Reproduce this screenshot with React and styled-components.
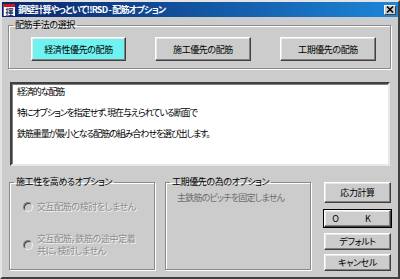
import React from "react";
import styled, { createGlobalStyle } from "styled-components";

const GlobalStyle = createGlobalStyle`
  html, body {
    margin: 0;
    padding: 0;
    background: #cccccc;
  }
  body {
    font-family: "Noto Sans CJK JP", "Liberation Sans", sans-serif;
    font-size: 9px;
    letter-spacing: -0.4px;
    font-feature-settings: "palt";
  }
`;

const Window = styled.div`
  width: 400px;
  height: 279px;
  box-sizing: border-box;
  background: #cccccc;
  border: 2px solid;
  border-color: #e4e4e4 #404040 #404040 #e4e4e4;
  display: flex;
  flex-direction: column;
`;

const TitleBar = styled.div`
  height: 15px;
  display: flex;
  align-items: center;
  padding: 0 2px 0 1px;
  background: linear-gradient(to right, #0a246a, #1c86d8);
  color: white;
`;

const AppIcon = styled.span`
  width: 12px;
  height: 12px;
  box-sizing: border-box;
  background: white;
  border-top: 3px solid #d01818;
  border-left: 1px solid #5060a0;
  color: #102060;
  font-size: 8px;
  line-height: 9px;
  letter-spacing: 0;
  font-weight: bold;
  text-align: center;
  overflow: hidden;
`;

const Title = styled.span`
  margin-left: 3px;
  font-weight: bold;
  font-size: 9px;
  letter-spacing: -0.8px;
  line-height: 15px;
  white-space: nowrap;
  flex: 1;
`;

const CloseButton = styled.span`
  width: 12px;
  height: 10px;
  box-sizing: border-box;
  background: #cccccc;
  border: 1px solid;
  border-color: #fff #404040 #404040 #fff;
  display: flex;
  align-items: center;
  justify-content: center;
`;

const Body = styled.div`
  flex: 1;
  display: flex;
  flex-direction: column;
  padding: 2px 7px 0 6px;
`;

const Group = styled.fieldset`
  margin: 0 0 0 ${(p) => p.$left || 0}px;
  padding: ${(p) => p.$pad || "0"};
  border: 1px solid #8a8a8a;
  box-shadow: inset 1px 1px 0 #fff, 1px 1px 0 #fff;
  min-width: 0;
  box-sizing: border-box;
  width: ${(p) => p.$width || "auto"};
  height: ${(p) => (p.$height ? `${p.$height}px` : "auto")};
  overflow: hidden;
`;

const Legend = styled.legend`
  margin-left: 4px;
  padding: 0 2px;
  font-size: 9px;
  line-height: 12px;
  color: #000;
`;

const MethodRow = styled.div`
  display: flex;
  gap: 29px;
  padding-left: 22px;
`;

const WinButton = styled.button`
  width: ${(p) => p.$w || 96}px;
  height: ${(p) => p.$h || 24}px;
  margin-top: ${(p) => p.$top || 0}px;
  box-sizing: border-box;
  padding: 0;
  font-family: inherit;
  font-feature-settings: "palt";
  font-size: 9px;
  color: #000;
  background: ${(p) => (p.$active ? "#70f2f0" : "#cccccc")};
  border: 1px solid;
  border-color: #fff #404040 #404040 #fff;
  box-shadow: inset -1px -1px 0 #808080, inset 1px 1px 0 #e8e8e8;
  outline: ${(p) => (p.$default ? "1px solid #000" : "none")};
  outline-offset: 0;
  letter-spacing: ${(p) => p.$spacing || "-0.4px"};
`;

const Memo = styled.div`
  margin: 13px 1px 0 2px;
  height: 84px;
  box-sizing: border-box;
  background: #fff;
  border: 2px solid;
  border-color: #404040 #e8e8e8 #e8e8e8 #404040;
  box-shadow: inset 1px 1px 0 #808080;
  padding: 2px 5px 0;
  display: flex;
  flex-direction: column;
  gap: 9px;
`;

const MemoLine = styled.div`
  font-size: 9px;
  letter-spacing: -1.1px;
  line-height: 12px;
  color: #000;
  white-space: nowrap;
`;

const BottomRow = styled.div`
  margin-top: 10px;
  display: flex;
  align-items: flex-start;
`;

const RadioList = styled.div`
  display: flex;
  flex-direction: column;
  gap: 20px;
  padding: 13px 0 0 13px;
`;

const RadioRow = styled.label`
  display: flex;
  align-items: center;
  gap: 4px;
`;

const RadioDot = styled.span`
  width: 10px;
  height: 10px;
  flex: none;
  border-radius: 50%;
  box-sizing: border-box;
  border: 1px solid;
  border-color: #808080 #f0f0f0 #f0f0f0 #808080;
  background: #cccccc;
  box-shadow: inset 1px 1px 0 #404040;
`;

const DisabledText = styled.span`
  color: #8c8c8c;
  text-shadow: 1px 1px 0 #f4f4f4;
  font-size: 9px;
  line-height: 12px;
  white-space: nowrap;
`;

const Note = styled.div`
  padding: 4px 0 0 11px;
  color: #6c6c6c;
  font-size: 9px;
  letter-spacing: -0.8px;
  line-height: 12px;
  white-space: nowrap;
`;

const ButtonColumn = styled.div`
  margin: 6px 0 0 auto;
  display: flex;
  flex-direction: column;
`;

export default function App() {
  return (
    <>
      <GlobalStyle />
      <Window>
        <TitleBar>
          <AppIcon>揮</AppIcon>
          <Title>鋼壁計算やっといて!!RSD - 配筋オプション</Title>
          <CloseButton>
            <svg width="8" height="7" viewBox="0 0 8 7">
              <path d="M1 0.5 L7 6.5 M7 0.5 L1 6.5" stroke="#000" strokeWidth="1.6" />
            </svg>
          </CloseButton>
        </TitleBar>
        <Body>
          <Group $pad="6px 0 7px 0">
            <Legend>配筋手法の選択</Legend>
            <MethodRow>
              <WinButton $active $w={95}>経済性優先の配筋</WinButton>
              <WinButton>施工優先の配筋</WinButton>
              <WinButton>工期優先の配筋</WinButton>
            </MethodRow>
          </Group>
          <Memo>
            <MemoLine>経済的な配筋</MemoLine>
            <MemoLine>特にオプションを指定せず、現在与えられている断面で</MemoLine>
            <MemoLine>鉄筋重量が最小となる配筋の組み合わせを選び出します。</MemoLine>
          </Memo>
          <BottomRow>
            <Group $width="146px" $height={94} $left={1}>
              <Legend>施工性を高めるオプション</Legend>
              <RadioList>
                <RadioRow>
                  <RadioDot />
                  <DisabledText>交互配筋の検討をしません</DisabledText>
                </RadioRow>
                <RadioRow>
                  <RadioDot />
                  <DisabledText>
                    交互配筋，鉄筋の途中定着
                    <br />
                    共に，検討しません
                  </DisabledText>
                </RadioRow>
              </RadioList>
            </Group>
            <Group $width="146px" $height={94} $left={10}>
              <Legend>工期優先の為のオプション</Legend>
              <Note>主鉄筋のピッチを固定しません</Note>
            </Group>
            <ButtonColumn>
              <WinButton $w={67} $h={21}>応力計算</WinButton>
              <WinButton $w={67} $h={17} $top={7} $default $spacing="12px">
                O K
              </WinButton>
              <WinButton $w={67} $h={17} $top={6}>デフォルト</WinButton>
              <WinButton $w={67} $h={17} $top={4}>キャンセル</WinButton>
            </ButtonColumn>
          </BottomRow>
        </Body>
      </Window>
    </>
  );
}
